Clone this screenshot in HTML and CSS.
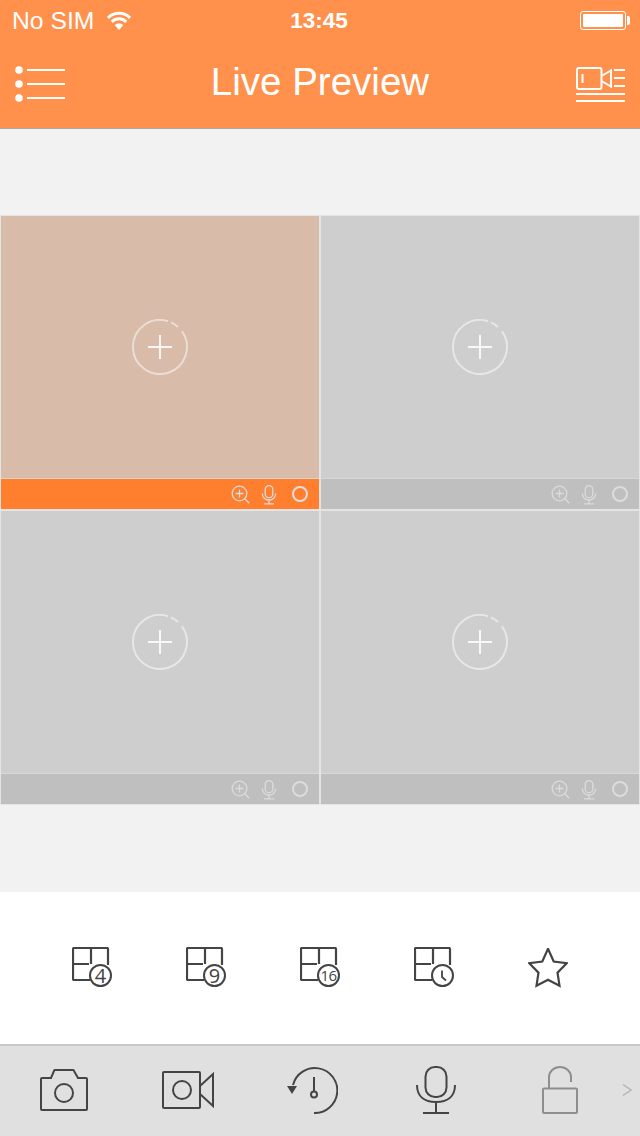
FILE: index.html
```html
<!DOCTYPE html>
<html lang="en">
<head>
    <meta charset="UTF-8">
    <meta name="viewport" content="width=device-width, initial-scale=1.0">
    <title>Live Preview</title>
    <link rel="stylesheet" href="styles.css">
</head>
<body>
    <svg class="defs" width="0" height="0">
        <symbol id="add" viewBox="0 0 56 56">
            <path class="ring" d="M39 3.300A27 27 0 0 1 46 7.900" />
            <path class="ring" d="M36 2.200A27 27 0 1 0 50 12.400" />
            <path class="cross" d="M28 16v24M16 28h24" />
        </symbol>
        <symbol id="zoom" viewBox="0 0 20 20">
            <circle cx="8.500" cy="8.500" r="7.300" />
            <path d="M8.500 4.500v8M4.500 8.500h8M13.800 13.800l4.400 4.400" />
        </symbol>
        <symbol id="mic" viewBox="0 0 16 20">
            <rect x="4.200" y="0.700" width="7.600" height="12" rx="3.800" />
            <path d="M1.300 8.500c0 4 3 6.500 6.700 6.500s6.700-2.500 6.700-6.500M8 15v3.500M3 18.800h10" />
        </symbol>
        <symbol id="grid" viewBox="0 0 38 34">
            <path d="M2 1h33a1 1 0 0 1 1 1v16M1 2v30a1 1 0 0 0 1 1h16M19 1v16M1 17h16M1 2a1 1 0 0 1 1-1" />
        </symbol>
    </svg>

    <header class="top">
        <div class="status">
            <div class="status-left">
                <span>No SIM</span>
                <svg class="wifi" width="26" height="20" viewBox="0 0 26 20">
                    <path d="M13 19l-4.300-5a6.300 6.300 0 0 1 8.600 0z" fill="#fff" />
                    <path class="wifi-arc" d="M5.700 10.800a10.500 10.500 0 0 1 14.600 0M2 6.800a15.800 15.800 0 0 1 22 0" />
                </svg>
            </div>
            <span class="clock">13:45</span>
            <div class="battery"><div class="battery-fill"></div></div>
        </div>
        <div class="nav">
            <svg class="nav-icon" width="50" height="38" viewBox="0 0 50 38">
                <circle class="dot" cx="4" cy="4" r="3.800" />
                <circle class="dot" cx="4" cy="18" r="3.800" />
                <circle class="dot" cx="4" cy="32" r="3.800" />
                <path d="M12 4h38M12 18h38M12 32h38" />
            </svg>
            <h1>Live Preview</h1>
            <svg class="nav-icon" width="50" height="38" viewBox="0 0 50 38">
                <rect x="2" y="2" width="24.500" height="21" rx="2" />
                <path d="M26.500 10l9.500-5.500v16L26.500 15M7.500 8v9M39 4h11M39 12h11M39 20h11M1 28h49M1 35h49" />
            </svg>
        </div>
    </header>

    <main class="preview">
        <div class="grid">
            <div class="cell active">
                <div class="video"><svg class="add"><use href="#add" /></svg></div>
                <div class="cell-bar">
                    <svg class="bar-icon"><use href="#zoom" /></svg>
                    <svg class="bar-icon"><use href="#mic" /></svg>
                    <span class="rec"></span>
                </div>
            </div>
            <div class="cell">
                <div class="video"><svg class="add"><use href="#add" /></svg></div>
                <div class="cell-bar">
                    <svg class="bar-icon"><use href="#zoom" /></svg>
                    <svg class="bar-icon"><use href="#mic" /></svg>
                    <span class="rec"></span>
                </div>
            </div>
            <div class="cell">
                <div class="video"><svg class="add"><use href="#add" /></svg></div>
                <div class="cell-bar">
                    <svg class="bar-icon"><use href="#zoom" /></svg>
                    <svg class="bar-icon"><use href="#mic" /></svg>
                    <span class="rec"></span>
                </div>
            </div>
            <div class="cell">
                <div class="video"><svg class="add"><use href="#add" /></svg></div>
                <div class="cell-bar">
                    <svg class="bar-icon"><use href="#zoom" /></svg>
                    <svg class="bar-icon"><use href="#mic" /></svg>
                    <span class="rec"></span>
                </div>
            </div>
        </div>
    </main>

    <section class="layouts">
        <div class="layout-btn">
            <svg class="grid-icon"><use href="#grid" /></svg>
            <span class="badge">4</span>
        </div>
        <div class="layout-btn">
            <svg class="grid-icon"><use href="#grid" /></svg>
            <span class="badge">9</span>
        </div>
        <div class="layout-btn">
            <svg class="grid-icon"><use href="#grid" /></svg>
            <span class="badge badge-small">16</span>
        </div>
        <div class="layout-btn">
            <svg class="grid-icon"><use href="#grid" /></svg>
            <span class="badge">
                <svg width="14" height="14" viewBox="0 0 14 14"><path d="M6 1.500v6.500l4 3.500" /></svg>
            </span>
        </div>
        <div class="layout-btn">
            <svg class="star" width="40" height="40" viewBox="0 0 40 40">
                <path d="M20 .8l5.700 12.700 13 1.700-9.200 9.500 2 13-11.500-6-11.500 6 2-13-9.200-9.500 13-1.700z" />
            </svg>
        </div>
    </section>

    <footer class="tools">
        <div class="tool">
            <svg width="48" height="42" viewBox="0 0 48 42">
                <path d="M2 41h44a1 1 0 0 0 1-1V10a1 1 0 0 0-1-1h-8l-4-7a1 1 0 0 0-1-1H15a1 1 0 0 0-1 1l-3 7H2a1 1 0 0 0-1 1v30a1 1 0 0 0 1 1z" />
                <circle cx="24" cy="24" r="9" />
            </svg>
        </div>
        <div class="tool">
            <svg width="52" height="38" viewBox="0 0 52 38">
                <path d="M2 1h35a1 1 0 0 1 1 1v34a1 1 0 0 1-1 1H2a1 1 0 0 1-1-1V2a1 1 0 0 1 1-1z" />
                <circle cx="20" cy="19" r="9" />
                <path d="M38 15L51 3v32L38 23" />
            </svg>
        </div>
        <div class="tool">
            <svg width="52" height="48" viewBox="0 0 52 48">
                <path d="M7 19A22.500 22.500 0 1 1 28 47" />
                <path class="solid" d="M1 20h10l-5 8z" />
                <path d="M28 11v15" />
                <circle cx="28" cy="28.500" r="3" />
            </svg>
        </div>
        <div class="tool">
            <svg width="40" height="48" viewBox="0 0 40 48">
                <rect x="9.500" y="1" width="21" height="30" rx="9.500" />
                <path d="M1 19c0 12 8 17 19 17s19-5 19-17M20 36v11M7 47h26" />
            </svg>
        </div>
        <div class="tool tool-off">
            <svg width="36" height="48" viewBox="0 0 36 48">
                <path d="M7 22V11a11 10 0 0 1 22 0v5" />
                <rect x="1" y="22.500" width="34" height="24.500" rx="1" />
            </svg>
        </div>
        <svg class="more" width="10" height="14" viewBox="0 0 10 14"><path d="M1 1.500l8 5.500-8 5.500" /></svg>
    </footer>
</body>
</html>
```

FILE: styles.css
```css
* {
    box-sizing: border-box;
    margin: 0;
    padding: 0;
}

body {
    width: 640px;
    height: 1136px;
    overflow: hidden;
    display: flex;
    flex-direction: column;
    font-family: "Liberation Sans", Arial, sans-serif;
    background: #f2f2f2;
}

svg {
    fill: none;
    display: block;
}

.defs {
    position: absolute;
}

/* Top bar */
.top {
    height: 129px;
    background: #ff914d;
    border-bottom: 1px solid #a9a9a9;
    color: #fff;
}

.status {
    height: 40px;
    padding: 0 14px 0 12px;
    display: grid;
    grid-template-columns: 1fr auto 1fr;
    align-items: center;
    font-size: 24.7px;
}

.status-left {
    display: flex;
    align-items: center;
    gap: 12px;
    padding-top: 1px;
}

.wifi-arc {
    stroke: #fff;
    stroke-width: 3;
}

.clock {
    font-size: 22.5px;
    font-weight: bold;
    padding-top: 2px;
}

.battery {
    justify-self: end;
    position: relative;
    width: 46px;
    height: 19px;
    border: 1px solid #fff;
    border-radius: 3px;
    padding: 2px;
}

.battery::after {
    content: "";
    position: absolute;
    right: -5px;
    top: 4px;
    width: 3px;
    height: 9px;
    background: #fff;
    border-radius: 0 2px 2px 0;
}

.battery-fill {
    height: 100%;
    background: #fff;
    border-radius: 1px;
}

.nav {
    height: 88px;
    padding: 0 15px;
    display: flex;
    align-items: center;
    justify-content: space-between;
}

.nav h1 {
    font-size: 38.5px;
    font-weight: normal;
    margin-bottom: 4px;
}

.nav-icon {
    stroke: #fff;
    stroke-width: 2;
    margin-top: 2px;
}

.dot {
    fill: #fff;
    stroke: none;
}

/* Preview grid */
.preview {
    flex: 1;
    padding-top: 86px;
}

.grid {
    width: 100%;
    display: grid;
    grid-template-columns: 320px 320px;
}

.cell {
    height: 295px;
    border: 1px solid #e4e4e4;
    display: flex;
    flex-direction: column;
}

.video {
    flex: 1;
    background: #cecece;
    display: flex;
    align-items: center;
    justify-content: center;
}

.active .video {
    background: #d8bba8;
}

.add {
    width: 56px;
    height: 56px;
}

.ring {
    stroke: #fff;
    stroke-opacity: 0.5;
    stroke-width: 2;
}

.cross {
    stroke: #fff;
    stroke-opacity: 0.85;
    stroke-width: 2;
}

.cell-bar {
    height: 31px;
    background: #bfbfbf;
    border-top: 1px solid #d8d8d8;
    padding-right: 11px;
    display: flex;
    align-items: center;
    justify-content: flex-end;
    gap: 8px;
}

.active .cell-bar {
    background: #ff7f2e;
    border-top-color: #e4d4c8;
}

.bar-icon {
    width: 20px;
    height: 20px;
    margin-top: 1px;
    stroke: #dcdcdc;
    stroke-width: 1.300;
}

.rec {
    width: 16px;
    height: 16px;
    margin-left: 5px;
    border: 2px solid #dcdcdc;
    border-radius: 50%;
}

/* Layout buttons */
.layouts {
    height: 152px;
    background: #fff;
    padding: 0 35px;
    display: grid;
    grid-template-columns: repeat(5, 114px);
    align-items: center;
}

.layout-btn {
    position: relative;
    width: 40px;
    height: 40px;
    justify-self: center;
    color: #444;
}

.grid-icon {
    width: 38px;
    height: 34px;
    stroke: #444;
    stroke-width: 2.200;
    margin-top: -1px;
}

.badge {
    position: absolute;
    right: 0;
    bottom: 1px;
    width: 23px;
    height: 23px;
    background: #fff;
    border: 2px solid #444;
    border-radius: 50%;
    font-family: "Open Sans", sans-serif;
    font-size: 20px;
    line-height: 19px;
    display: flex;
    align-items: center;
    justify-content: center;
}

.badge-small {
    font-size: 15px;
    letter-spacing: -0.5px;
}

.badge svg {
    stroke: #444;
    stroke-width: 1.800;
}

.star {
    stroke: #444;
    stroke-width: 2.200;
}

/* Bottom tool bar */
.tools {
    position: relative;
    height: 92px;
    background: #e0e0e0;
    border-top: 2px solid #c8c8c8;
    padding: 0 0 2px 2px;
    display: grid;
    grid-template-columns: repeat(5, 124px);
    align-items: center;
}

.tool {
    justify-self: center;
    stroke: #444;
    stroke-width: 2;
}

.solid {
    fill: #444;
    stroke: none;
}

.tool-off {
    stroke: #8e8e8e;
}

.more {
    position: absolute;
    right: 8px;
    top: 37px;
    stroke: #b4b4b4;
    stroke-width: 1.500;
}
```
